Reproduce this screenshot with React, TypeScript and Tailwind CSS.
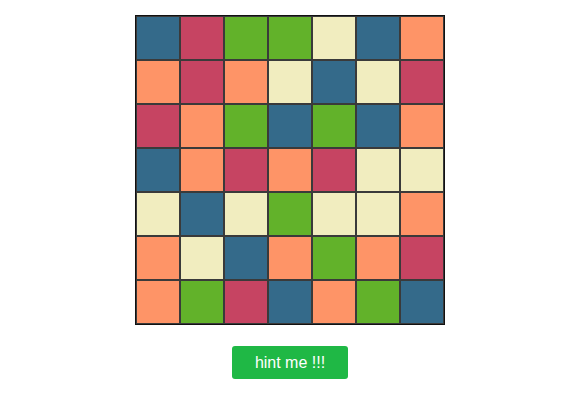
import React from 'react';

const colors: Record<string, string> = {
  B: 'bg-[#346a8a]',
  R: 'bg-[#c64462]',
  G: 'bg-[#62b22a]',
  C: 'bg-[#f1edbf]',
  O: 'bg-[#fe9467]',
};

const board = [
  'BRGGCBO',
  'OROCBCR',
  'ROGBGBO',
  'BORORCC',
  'CBCGCCO',
  'OCBOGOR',
  'OGRBOGB',
];

export default function App() {
  return (
    <div className="w-[580px] h-[400px] bg-white flex flex-col items-center pt-[15px] font-['Liberation_Sans',Arial,sans-serif]">
      <div className="border border-[#111] grid grid-cols-7">
        {board.map((row, r) =>
          row.split('').map((c, i) => (
            <div
              key={`${r}-${i}`}
              className={`w-[44px] h-[44px] border border-[#3a3a3a] ${colors[c]}`}
            />
          ))
        )}
      </div>
      <button className="mt-[21px] w-[116px] h-[33px] rounded-[3px] bg-[#1fb845] text-white text-[16px]">
        hint me !!!
      </button>
    </div>
  );
}
